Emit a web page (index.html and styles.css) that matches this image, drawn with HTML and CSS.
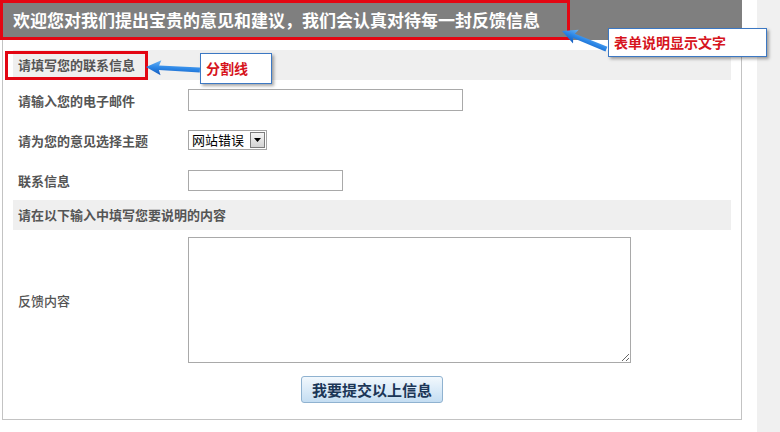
FILE: index.html
```html
<!DOCTYPE html>
<html lang="zh-CN">
<head>
<meta charset="utf-8">
<title>意见反馈</title>
<link rel="stylesheet" href="styles.css">
</head>
<body>
<div class="page">
  <div class="main">
    <div class="header"><h1 class="title">欢迎您对我们提出宝贵的意见和建议，我们会认真对待每一封反馈信息</h1></div>
    <form class="form">
      <div class="bar">请填写您的联系信息</div>
      <div class="row">
        <label class="label">请输入您的电子邮件</label>
        <input class="input input-long" type="text">
      </div>
      <div class="row">
        <label class="label">请为您的意见选择主题</label>
        <span class="select-wrap">
          <select class="select"><option>网站错误</option></select>
          <span class="select-btn"><svg width="7" height="4" viewBox="0 0 7 4"><path d="M0 0H7L3.5 4Z" fill="#000"/></svg></span>
        </span>
      </div>
      <div class="row">
        <label class="label">联系信息</label>
        <input class="input input-short" type="text">
      </div>
      <div class="bar">请在以下输入中填写您要说明的内容</div>
      <div class="row row-area">
        <label class="label label-plain">反馈内容</label>
        <textarea class="area"></textarea>
      </div>
      <div class="actions">
        <button class="submit" type="button">我要提交以上信息</button>
      </div>
    </form>
  </div>
  <div class="sidebar"></div>

  <div class="mark mark-section"></div>
  <div class="callout callout-title">表单说明显示文字</div>
  <div class="callout callout-bar">分割线</div>
  <svg class="arrows" width="780" height="432" viewBox="0 0 780 432">
    <defs>
      <linearGradient id="ag" x1="0" y1="-8" x2="0" y2="8" gradientUnits="userSpaceOnUse">
        <stop offset="0" stop-color="#6fb6f5"/>
        <stop offset="0.5" stop-color="#2b86e6"/>
        <stop offset="1" stop-color="#1356b8"/>
      </linearGradient>
    </defs>
    <g transform="translate(562,31) rotate(22.2)">
      <polygon points="0,0 15,-7.5 13,-2.3 48,-2.6 48,2.6 13,2.3 15,7.5" fill="url(#ag)"/>
    </g>
    <g transform="translate(146,67) rotate(3.2)">
      <polygon points="0,0 15,-7.5 13,-2.3 54,-2.6 54,2.6 13,2.3 15,7.5" fill="url(#ag)"/>
    </g>
  </svg>
</div>
</body>
</html>
```

FILE: styles.css
```css
html, body {
  margin: 0;
  padding: 0;
  background: #ffffff;
}

body {
  font-family: "Liberation Sans", "Noto Sans CJK SC", sans-serif;
}

.page {
  position: relative;
  display: flex;
  gap: 15px;
  width: 780px;
  min-height: 432px;
  overflow: hidden;
}

.main {
  width: 742px;
  flex: none;
}

.header {
  height: 40px;
  background: #7f7f7f;
}

.title {
  display: inline-block;
  box-sizing: border-box;
  margin: 0;
  height: 40px;
  width: 570px;
  padding-left: 10px;
  border: 3px solid #e30613;
  color: #ffffff;
  font-family: "Noto Sans CJK SC", sans-serif;
  font-size: 17px;
  font-weight: 700;
  line-height: 33px;
  white-space: nowrap;
}

.form {
  margin: 0 0 0 2px;
  width: 740px;
  box-sizing: border-box;
  border: 1px solid #c3c3c3;
  border-top: none;
  padding: 10px 10px 16px 10px;
}

.bar {
  height: 30px;
  background: #efefef;
  padding-left: 5px;
  font-family: "Noto Sans CJK SC", sans-serif;
  font-size: 13px;
  font-weight: 700;
  color: #555555;
  line-height: 30px;
}

.row {
  display: flex;
  align-items: center;
  height: 40px;
  padding-left: 5px;
}

.row-area {
  height: auto;
  padding-top: 7px;
}

.label {
  width: 170px;
  flex: none;
  font-family: "Noto Sans CJK SC", sans-serif;
  font-size: 13px;
  font-weight: 700;
  color: #555555;
}

.label-plain {
  font-weight: 500;
  color: #555555;
}

.input {
  box-sizing: border-box;
  height: 22px;
  margin: 0;
  border: 1px solid #a9a9a9;
  padding: 0 3px;
  background: #fff;
}

.input-long {
  width: 275px;
}

.input-short {
  width: 155px;
  height: 21px;
}

.select-wrap {
  display: inline-flex;
  align-items: center;
  box-sizing: border-box;
  width: 79px;
  height: 20px;
  border: 1px solid #a5a5a5;
  background: #fff;
}

.select {
  appearance: none;
  -webkit-appearance: none;
  border: none;
  outline: none;
  background: transparent;
  margin: 0;
  padding: 0 0 0 3px;
  width: 61px;
  height: 18px;
  font-family: "Noto Sans CJK SC", sans-serif;
  font-size: 13px;
  color: #000;
  line-height: 18px;
}

.select-btn {
  display: flex;
  align-items: center;
  justify-content: center;
  box-sizing: border-box;
  width: 15px;
  height: 16px;
  border: 1px solid #7c7c7c;
  background: linear-gradient(#f4f4f4, #d4d4d4);
}

.area {
  box-sizing: border-box;
  width: 443px;
  height: 126px;
  margin: 0;
  border: 1px solid #a9a9a9;
  padding: 2px;
  resize: both;
}

.actions {
  display: flex;
  justify-content: center;
  padding-top: 13px;
}

.submit {
  box-sizing: border-box;
  width: 142px;
  height: 27px;
  margin: 0;
  padding: 0;
  border: 1px solid #8fb2d0;
  border-radius: 3px;
  background: linear-gradient(#f2f8fd, #d6e8f7 60%, #c4ddf2);
  color: #1b3657;
  font-family: "Noto Sans CJK SC", sans-serif;
  font-size: 15px;
  font-weight: 700;
  line-height: 25px;
}

.sidebar {
  width: 23px;
  flex: none;
  background: #f0f0f0;
}

.mark {
  position: absolute;
  box-sizing: border-box;
  border: 3px solid #e30613;
  pointer-events: none;
}

.mark-section {
  left: 5px;
  top: 51px;
  width: 143px;
  height: 29px;
}

.callout {
  position: absolute;
  box-sizing: border-box;
  background: #ffffff;
  border: 1px solid #3c78c3;
  box-shadow: 2px 2px 3px rgba(0, 0, 0, 0.35);
  color: #d6141d;
  font-family: "Noto Sans CJK SC", sans-serif;
  font-size: 14px;
  font-weight: 700;
  padding-left: 5px;
  white-space: nowrap;
}

.callout-title {
  left: 608px;
  top: 28px;
  width: 159px;
  height: 29px;
  line-height: 27px;
}

.callout-bar {
  left: 200px;
  top: 53px;
  width: 72px;
  height: 31px;
  line-height: 29px;
}

.arrows {
  position: absolute;
  left: 0;
  top: 0;
  pointer-events: none;
}
```
